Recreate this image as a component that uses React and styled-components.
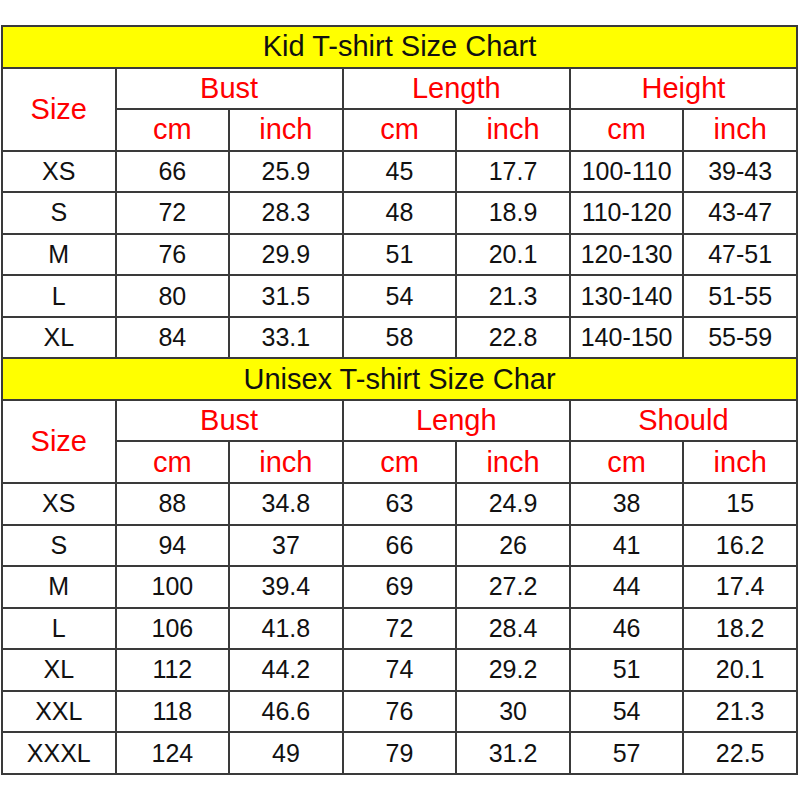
import React from "react";
import styled, { createGlobalStyle } from "styled-components";

const Global = createGlobalStyle`
  html, body { margin: 0; padding: 0; background: #fff; }
  body { font-family: "Liberation Sans", Arial, sans-serif; }
`;

const Page = styled.div`
  padding: 25px 2px 0 1px;
  width: 800px;
  box-sizing: border-box;
`;

const Chart = styled.table`
  width: 797px;
  table-layout: fixed;
  border-collapse: collapse;
  font-family: "Liberation Sans", Arial, sans-serif;
`;

const Row = styled.tr`
  height: 41.55px;
`;

const Cell = styled.td`
  border: 2px solid #3a3a3a;
  padding: 0;
  text-align: center;
  vertical-align: middle;
  line-height: 1;
`;

const TitleCell = styled(Cell)`
  background: #ffff00;
  color: #111;
  font-size: 29px;
`;

const HeadCell = styled(Cell)`
  color: #ff0000;
  font-size: 29px;
`;

const DataCell = styled(Cell)`
  color: #111;
  font-size: 25px;
`;

const sections = [
  {
    title: "Kid T-shirt Size Chart",
    groups: ["Bust", "Length", "Height"],
    rows: [
      ["XS", "66", "25.9", "45", "17.7", "100-110", "39-43"],
      ["S", "72", "28.3", "48", "18.9", "110-120", "43-47"],
      ["M", "76", "29.9", "51", "20.1", "120-130", "47-51"],
      ["L", "80", "31.5", "54", "21.3", "130-140", "51-55"],
      ["XL", "84", "33.1", "58", "22.8", "140-150", "55-59"],
    ],
  },
  {
    title: "Unisex T-shirt Size Char",
    groups: ["Bust", "Lengh", "Should"],
    rows: [
      ["XS", "88", "34.8", "63", "24.9", "38", "15"],
      ["S", "94", "37", "66", "26", "41", "16.2"],
      ["M", "100", "39.4", "69", "27.2", "44", "17.4"],
      ["L", "106", "41.8", "72", "28.4", "46", "18.2"],
      ["XL", "112", "44.2", "74", "29.2", "51", "20.1"],
      ["XXL", "118", "46.6", "76", "30", "54", "21.3"],
      ["XXXL", "124", "49", "79", "31.2", "57", "22.5"],
    ],
  },
];

export default function App() {
  return (
    <Page>
      <Global />
      <Chart>
        <colgroup>
          {Array.from({ length: 7 }).map((_, i) => (
            <col key={i} />
          ))}
        </colgroup>
        <tbody>
          {sections.map((s) => (
            <React.Fragment key={s.title}>
              <Row>
                <TitleCell colSpan={7}>{s.title}</TitleCell>
              </Row>
              <Row>
                <HeadCell rowSpan={2}>Size</HeadCell>
                {s.groups.map((g) => (
                  <HeadCell key={g} colSpan={2}>
                    {g}
                  </HeadCell>
                ))}
              </Row>
              <Row>
                {s.groups.map((g) => (
                  <React.Fragment key={g}>
                    <HeadCell>cm</HeadCell>
                    <HeadCell>inch</HeadCell>
                  </React.Fragment>
                ))}
              </Row>
              {s.rows.map((r) => (
                <Row key={r[0]}>
                  {r.map((v, i) => (
                    <DataCell key={i}>{v}</DataCell>
                  ))}
                </Row>
              ))}
            </React.Fragment>
          ))}
        </tbody>
      </Chart>
    </Page>
  );
}
